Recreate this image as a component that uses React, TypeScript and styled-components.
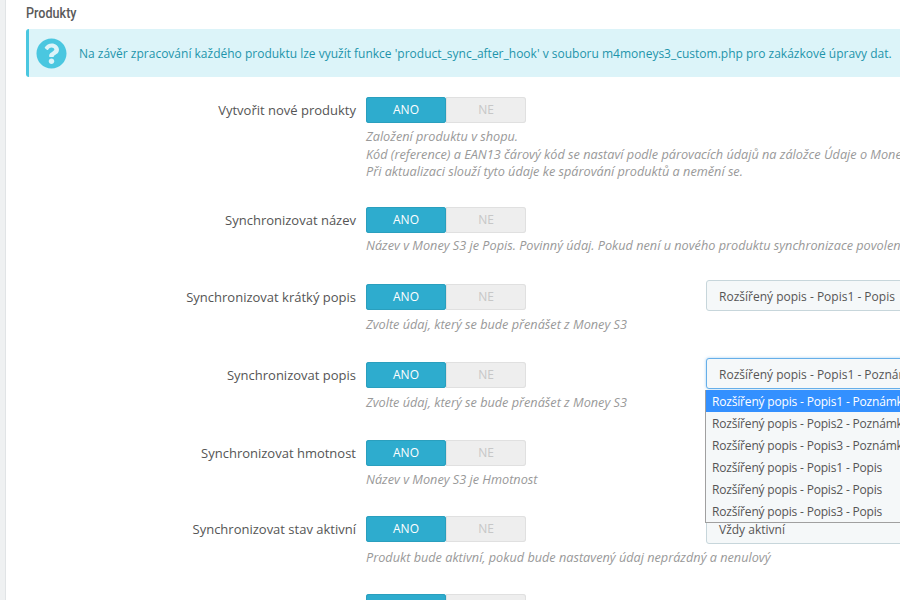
import React from "react";
import styled, { createGlobalStyle } from "styled-components";
import { FaQuestionCircle } from "react-icons/fa";

const GlobalStyle = createGlobalStyle`
  html, body {
    margin: 0;
    padding: 0;
    width: 900px;
    height: 600px;
    overflow: hidden;
    background: #fff;
    font-family: "Open Sans", "Liberation Sans", sans-serif;
    color: #555;
  }
`;

const Page = styled.div`
  width: 900px;
  height: 600px;
  overflow: hidden;
  display: flex;
  box-sizing: border-box;
`;

const SideStrip = styled.div`
  flex: none;
  width: 5px;
  background: #eff1f2;
  border-right: 1px solid #e1e4e6;
`;

const Panel = styled.div`
  flex: none;
  width: 1100px;
  padding: 5px 0 0 20px;
  box-sizing: border-box;
`;

const Heading = styled.h3`
  margin: 0 0 7px;
  font-family: "Roboto", "Liberation Sans", sans-serif;
  font-size: 15px;
  line-height: 17px;
  font-weight: 500;
  color: #5a5a5a;
  transform: scaleX(0.84);
  transform-origin: left center;
`;

const Alert = styled.div`
  display: flex;
  align-items: center;
  gap: 12px;
  height: 48px;
  box-sizing: border-box;
  padding-left: 7px;
  margin-bottom: 20px;
  background: #dcf4f9;
  border-left: 3px solid #4ac7e0;
  border-radius: 3px;
  color: #1e94ab;
  font-size: 12px;
  svg {
    flex: none;
    color: #4ac7e0;
  }
`;

const Row = styled.div<{ $height: number }>`
  display: grid;
  grid-template-columns: 330px 350px 400px;
  height: ${(p) => p.$height}px;
`;

const Label = styled.label`
  text-align: right;
  font-size: 13px;
  line-height: 26px;
`;

const Control = styled.div`
  padding-left: 10px;
`;

const Toggle = styled.div`
  display: flex;
  width: 160px;
  height: 26px;
  font-size: 12px;
  line-height: 26px;
  text-align: center;
`;

const ToggleOn = styled.span`
  width: 80px;
  background: #2eacce;
  color: #fff;
  border-radius: 3px;
  box-shadow: inset 0 0 0 1px #2a9fbe;
`;

const ToggleOff = styled.span`
  width: 80px;
  background: #eee;
  color: #c7c7c7;
  border-radius: 0 3px 3px 0;
  box-shadow: inset 0 0 0 1px #e0e0e0;
`;

const Help = styled.p<{ $offset: number }>`
  margin: ${(p) => p.$offset}px 0 0;
  width: 560px;
  white-space: nowrap;
  font-size: 12.7px;
  line-height: 17.5px;
  font-style: italic;
  color: #999;
`;

const SelectWrap = styled.div`
  position: relative;
  height: 0;
`;

const Select = styled.div<{ $focused?: boolean; $top: number }>`
  margin-top: ${(p) => p.$top}px;
  height: 31px;
  box-sizing: border-box;
  padding-left: 12px;
  font-size: 12px;
  line-height: 32px;
  white-space: nowrap;
  background: #f5f8f9;
  border: 1px solid ${(p) => (p.$focused ? "#66afe9" : "#c7d6db")};
  border-radius: 3px;
  color: #555;
  box-shadow: ${(p) => (p.$focused ? "0 0 3px rgba(102, 175, 233, 0.6)" : "none")};
`;

const Dropdown = styled.ul`
  position: absolute;
  z-index: 2;
  top: 28px;
  left: -1px;
  width: 400px;
  margin: 0;
  padding: 0;
  list-style: none;
  background: #f5f8f9;
  border: 1px solid #a0a0a0;
  border-top: none;
  box-sizing: border-box;
  font-size: 12px;
  letter-spacing: -0.18px;
`;

const Option = styled.li<{ $selected?: boolean }>`
  height: 22px;
  line-height: 24px;
  padding-left: 6px;
  white-space: nowrap;
  background: ${(p) => (p.$selected ? "#3390ff" : "transparent")};
  color: ${(p) => (p.$selected ? "#fff" : "#555")};
`;

const options = [
  "Rozšířený popis - Popis1 - Poznámka",
  "Rozšířený popis - Popis2 - Poznámka",
  "Rozšířený popis - Popis3 - Poznámka",
  "Rozšířený popis - Popis1 - Popis",
  "Rozšířený popis - Popis2 - Popis",
  "Rozšířený popis - Popis3 - Popis",
];

const rows = [
  {
    label: "Vytvořit nové produkty",
    height: 110,
    helpOffset: 5,
    help: [
      "Založení produktu v shopu.",
      "Kód (reference) a EAN13 čárový kód se nastaví podle párovacích údajů na záložce Údaje o Money S3",
      "Při aktualizaci slouží tyto údaje ke spárování produktů a nemění se.",
    ],
  },
  {
    label: "Synchronizovat název",
    height: 77,
    helpOffset: 4,
    help: ["Název v Money S3 je Popis. Povinný údaj. Pokud není u nového produktu synchronizace povolena"],
  },
  {
    label: "Synchronizovat krátký popis",
    height: 78,
    helpOffset: 6,
    help: ["Zvolte údaj, který se bude přenášet z Money S3"],
    select: "Rozšířený popis - Popis1 - Popis",
    selectTop: -4,
  },
  {
    label: "Synchronizovat popis",
    height: 78,
    helpOffset: 6,
    help: ["Zvolte údaj, který se bude přenášet z Money S3"],
    select: "Rozšířený popis - Popis1 - Poznámka",
    selectTop: -4,
    open: true,
  },
  {
    label: "Synchronizovat hmotnost",
    height: 76,
    helpOffset: 5,
    help: ["Název v Money S3 je Hmotnost"],
  },
  {
    label: "Synchronizovat stav aktivní",
    height: 78,
    helpOffset: 7,
    help: ["Produkt bude aktivní, pokud bude nastavený údaj neprázdný a nenulový"],
    select: "Vždy aktivní",
    selectTop: -3,
  },
  { label: "", height: 26, helpOffset: 0, help: [] },
];

const App: React.FC = () => {
  return (
    <Page>
      <GlobalStyle />
      <SideStrip />
      <Panel>
        <Heading>Produkty</Heading>
        <Alert>
          <FaQuestionCircle size={31} />
          Na závěr zpracování každého produktu lze využít funkce 'product_sync_after_hook' v souboru m4moneys3_custom.php pro zakázkové úpravy dat.
        </Alert>
        {rows.map((row, i) => (
          <Row key={i} $height={row.height}>
            <Label>{row.label}</Label>
            <Control>
              <Toggle>
                <ToggleOn>ANO</ToggleOn>
                <ToggleOff>NE</ToggleOff>
              </Toggle>
              {row.help.length > 0 && (
                <Help $offset={row.helpOffset}>
                  {row.help.map((line) => (
                    <React.Fragment key={line}>
                      {line}
                      <br />
                    </React.Fragment>
                  ))}
                </Help>
              )}
            </Control>
            {row.select && (
              <SelectWrap>
                <Select $focused={row.open} $top={row.selectTop ?? 0}>
                  {row.select}
                </Select>
                {row.open && (
                  <Dropdown>
                    {options.map((o, j) => (
                      <Option key={o} $selected={j === 0}>
                        {o}
                      </Option>
                    ))}
                  </Dropdown>
                )}
              </SelectWrap>
            )}
          </Row>
        ))}
      </Panel>
    </Page>
  );
};

export default App;
